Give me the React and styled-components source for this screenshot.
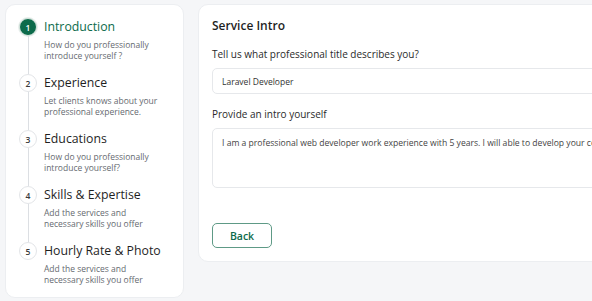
import styled, { createGlobalStyle } from "styled-components";

const GlobalStyle = createGlobalStyle`
  html, body {
    margin: 0;
    background: #f5f6f8;
    overflow: hidden;
  }
  * { box-sizing: border-box; }
`;

const steps = [
  { title: "Introduction", text: ["How do you professionally", "introduce yourself ?"] },
  { title: "Experience", text: ["Let clients knows about your", "professional experience."] },
  { title: "Educations", text: ["How do you professionally", "introduce yourself?"] },
  { title: "Skills & Expertise", text: ["Add the services and", "necessary skills you offer"] },
  { title: "Hourly Rate & Photo", text: ["Add the services and", "necessary skills you offer"] },
];

export default function App() {
  return (
    <>
      <GlobalStyle />
      <Page>
        <Sidebar>
          {steps.map((step, i) => (
            <Step key={step.title} $last={i === steps.length - 1}>
              <Circle $active={i === 0}>{i + 1}</Circle>
              <StepBody>
                <StepTitle $active={i === 0}>{step.title}</StepTitle>
                <StepText>
                  {step.text[0]}
                  <br />
                  {step.text[1]}
                </StepText>
              </StepBody>
            </Step>
          ))}
        </Sidebar>

        <Panel>
          <PanelTitle>Service Intro</PanelTitle>
          <Field>
            <Label>Tell us what professional title describes you?</Label>
            <Input defaultValue="Laravel Developer" />
          </Field>
          <Field>
            <Label>Provide an intro yourself</Label>
            <TextArea defaultValue="I am a professional web developer work experience with 5 years. I will able to develop your complete website" />
          </Field>
          <Actions>
            <BackButton type="button">Back</BackButton>
          </Actions>
        </Panel>
      </Page>
    </>
  );
}

const font = `"Open Sans", "Noto Sans", sans-serif`;

const Page = styled.main`
  display: flex;
  align-items: flex-start;
  gap: 14px;
  padding: 4px 0 0 5px;
  width: 1100px;
  font-family: ${font};
`;

const Sidebar = styled.aside`
  width: 179px;
  height: 294px;
  flex-shrink: 0;
  background: #fff;
  border: 1px solid #eceef1;
  border-radius: 10px;
  padding: 13px 13px;
  display: flex;
  flex-direction: column;
  gap: 13px;
`;

const Step = styled.div`
  position: relative;
  display: grid;
  grid-template-columns: 18px 1fr;
  column-gap: 7px;

  &::after {
    content: "";
    display: ${(p) => (p.$last ? "none" : "block")};
    position: absolute;
    left: 9px;
    top: 18px;
    height: 38px;
    width: 1px;
    background: #dcdfe3;
  }
`;

const Circle = styled.div`
  width: 18px;
  height: 18px;
  border-radius: 50%;
  display: grid;
  place-items: center;
  font-size: 8.5px;
  font-weight: 600;
  color: ${(p) => (p.$active ? "#fff" : "#3a3a3a")};
  background: ${(p) => (p.$active ? "#0d6b4b" : "#fff")};
  border: 1px solid ${(p) => (p.$active ? "#d9e6e0" : "#e3e5e8")};
  box-shadow: ${(p) => (p.$active ? "0 0 0 1px #e8efec" : "none")};
`;

const StepBody = styled.div`
  display: flex;
  flex-direction: column;
`;

const StepTitle = styled.div`
  font-size: 12.3px;
  line-height: 18px;
  font-weight: 500;
  color: ${(p) => (p.$active ? "#0d6b4b" : "#1f1f1f")};
  white-space: nowrap;
`;

const StepText = styled.div`
  margin-top: 3px;
  font-size: 8.5px;
  line-height: 11px;
  color: #666a70;
  white-space: nowrap;
`;

const Panel = styled.section`
  width: 440px;
  flex-shrink: 0;
  background: #fff;
  border: 1px solid #eceef1;
  border-radius: 10px;
  padding: 12px 13px 13px;
  display: flex;
  flex-direction: column;
`;

const PanelTitle = styled.h2`
  margin: 0;
  font-size: 12px;
  line-height: 18px;
  font-weight: 600;
  color: #1f1f1f;
`;

const Field = styled.div`
  display: flex;
  flex-direction: column;
  gap: 7px;
  margin-top: 12px;

  & + & {
    margin-top: 13px;
  }
`;

const Label = styled.label`
  font-size: 10px;
  line-height: 14px;
  font-weight: 500;
  color: #2a2a2a;
`;

const Input = styled.input`
  height: 26px;
  border: 1px solid #e6e8eb;
  border-radius: 5px;
  padding: 0 9px;
  font-family: ${font};
  font-size: 8.5px;
  color: #333;
  outline: none;
  width: 100%;
`;

const TextArea = styled.textarea`
  height: 60px;
  border: 1px solid #e6e8eb;
  border-radius: 5px;
  padding: 8px 9px;
  font-family: ${font};
  font-size: 8.6px;
  line-height: 12px;
  color: #444;
  outline: none;
  resize: none;
  white-space: nowrap;
  overflow: hidden;
  width: 100%;
`;

const Actions = styled.div`
  margin-top: 35px;
  display: flex;
`;

const BackButton = styled.button`
  width: 60px;
  height: 25px;
  border: 1px solid #5e9a86;
  border-radius: 5px;
  background: #fff;
  color: #0d6b4b;
  font-family: ${font};
  font-size: 10.5px;
  font-weight: 600;
  cursor: pointer;
`;
